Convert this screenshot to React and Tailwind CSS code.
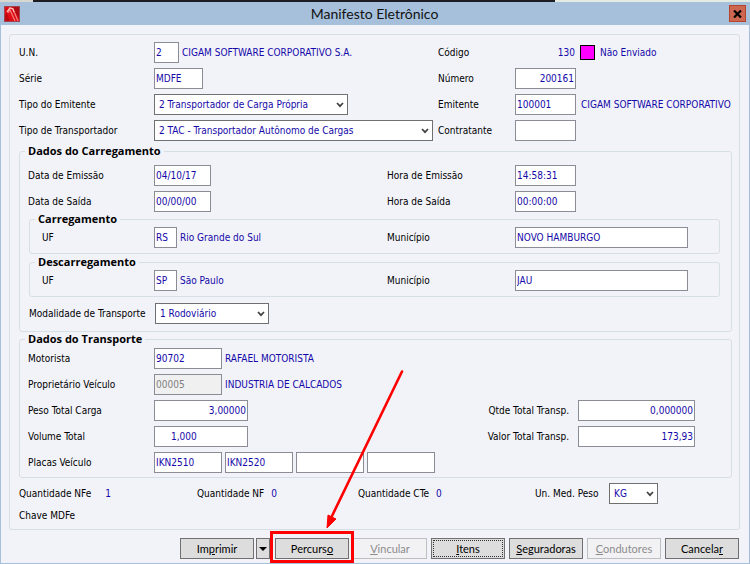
const Group = ({ title, className = '', bodyClass = '', children }) => (
    <fieldset className={`min-w-0 rounded-[3px] border border-[#d5dfe5] ${className}`}>
        <legend className="ml-[5px] h-[14px] px-[3px] font-['Open_Sans',sans-serif] text-[11px] leading-[14px] font-bold text-black">
            {title}
        </legend>
        <div className={bodyClass}>{children}</div>
    </fieldset>
);

const Label = ({ htmlFor, className = '', children }) => (
    <label htmlFor={htmlFor} className={`shrink-0 whitespace-nowrap text-black ${className}`}>
        {children}
    </label>
);

const Field = ({ className = '', ...props }) => (
    <input
        type="text"
        className={`h-[21px] shrink-0 border border-[#8c8c96] bg-white px-px text-[#1408a8] outline-none disabled:bg-[#f0f0f0] disabled:text-[#808080] ${className}`}
        {...props}
    />
);

const Select = ({ id, value, className = '' }) => (
    <div className={`relative h-[21px] shrink-0 ${className}`}>
        <select
            id={id}
            defaultValue={value}
            className="h-full w-full appearance-none border border-[#707070] bg-white pl-1 text-[#1408a8] outline-none"
        >
            <option>{value}</option>
        </select>
        <svg className="pointer-events-none absolute top-[8px] right-[4px]" width="8" height="6" viewBox="0 0 8 6">
            <path d="M1 1l3 3.2L7 1" fill="none" stroke="#404040" strokeWidth="1.7" />
        </svg>
    </div>
);

const Value = ({ className = '', children }) => (
    <span className={`whitespace-nowrap text-[#1408a8] ${className}`}>{children}</span>
);

const Button = ({ className = '', children, ...props }) => (
    <button
        type="button"
        className={`h-[21px] w-[74px] border border-[#707070] bg-[#dddddd] font-['Lato',sans-serif] text-[11px] leading-[14px] text-black disabled:border-[#bfbfbf] disabled:bg-[#f2f2f4] disabled:text-[#8c8c8c] ${className}`}
        {...props}
    >
        {children}
    </button>
);

const TitleBar = () => (
    <header className="flex h-[23px] items-center bg-[#a6c0dc] px-[3px]">
        <svg width="16" height="16" viewBox="0 0 16 16">
            <rect width="16" height="16" fill="#e00c16" />
            <path d="M10 0h6v14L9 3z" fill="#b00a12" />
            <path d="M0 10l3-3 3 9H0z" fill="#c00810" />
            <path d="M3 6l3-4 3 1 5 12M4 7l2-3 5 11" fill="none" stroke="#f4827c" strokeWidth="1.2" />
            <path d="M3 6l3-4 3 1 1 3" fill="none" stroke="#ffc4be" strokeWidth="1.2" />
            <rect x="0.5" y="0.5" width="15" height="15" fill="none" stroke="#a04452" />
        </svg>
        <h1 className="flex-1 text-center font-['Lato',sans-serif] text-[14px] leading-[20px] text-[#111]">
            Manifesto Eletrônico
        </h1>
        <button
            type="button"
            aria-label="Fechar"
            className="flex h-[17px] w-[17px] items-center justify-center border border-[#b5442c] bg-[#cc6650]"
        >
            <svg width="9" height="8" viewBox="0 0 9 8">
                <path d="M1 0.5l7 7M8 0.5l-7 7" stroke="#000" strokeWidth="2.2" />
            </svg>
        </button>
    </header>
);

const General = () => (
    <div className="grid grid-cols-[419fr_294fr]">
        <div className="space-y-[5px]">
            <div className="flex items-center">
                <Label htmlFor="un" className="w-[135px]">U.N.</Label>
                <Field id="un" defaultValue="2" className="w-[25px]" />
                <Value className="ml-[3px]">CIGAM SOFTWARE CORPORATIVO S.A.</Value>
            </div>
            <div className="flex items-center">
                <Label htmlFor="serie" className="w-[135px]">Série</Label>
                <Field id="serie" defaultValue="MDFE" className="w-[49px]" />
            </div>
            <div className="flex items-center">
                <Label htmlFor="tipoEmitente" className="w-[135px]">Tipo do Emitente</Label>
                <Select id="tipoEmitente" value="2 Transportador de Carga Própria" className="w-[194px]" />
            </div>
            <div className="flex items-center">
                <Label htmlFor="tipoTransp" className="w-[135px]">Tipo de Transportador</Label>
                <Select id="tipoTransp" value="2 TAC - Transportador Autônomo de Cargas" className="w-[279px]" />
            </div>
        </div>
        <div className="min-w-0 space-y-[5px]">
            <div className="flex h-[21px] items-center">
                <span className="w-[77px]">Código</span>
                <Value className="w-[60px] text-right">130</Value>
                <span className="mx-[5px] h-[15px] w-[15px] border border-black bg-[#ff00ff]" />
                <Value>Não Enviado</Value>
            </div>
            <div className="flex items-center">
                <Label htmlFor="numero" className="w-[77px]">Número</Label>
                <Field id="numero" defaultValue="200161" className="w-[61px] text-right" />
            </div>
            <div className="flex items-center">
                <Label htmlFor="emitente" className="w-[77px]">Emitente</Label>
                <Field id="emitente" defaultValue="100001" className="w-[61px]" />
                <Value className="ml-[5px]">CIGAM SOFTWARE CORPORATIVO</Value>
            </div>
            <div className="flex items-center">
                <Label htmlFor="contratante" className="w-[77px]">Contratante</Label>
                <Field id="contratante" className="w-[61px]" />
            </div>
        </div>
    </div>
);

const Place = ({ title, name, uf, state, city, className = '' }) => (
    <Group title={title} className={`mr-[11px] ml-[9px] ${className}`} bodyClass="pt-px pb-[5px] pl-[12px]">
        <div className="grid grid-cols-[345fr_332fr]">
            <div className="flex items-center">
                <Label htmlFor={`${name}Uf`} className="w-[112px]">UF</Label>
                <Field id={`${name}Uf`} defaultValue={uf} className="w-[23px]" />
                <Value className="ml-[3px]">{state}</Value>
            </div>
            <div className="flex items-center">
                <Label htmlFor={`${name}City`} className="w-[128px]">Município</Label>
                <Field id={`${name}City`} defaultValue={city} className="w-[173px]" />
            </div>
        </div>
    </Group>
);

const dates = [
    { id: 'Emissao', label: 'Emissão', date: '04/10/17', time: '14:58:31' },
    { id: 'Saida', label: 'Saída', date: '00/00/00', time: '00:00:00' },
];

const Loading = () => (
    <Group title="Dados do Carregamento" className="mt-[3px]" bodyClass="py-[7px]">
        <div className="space-y-[5px] pl-[8px]">
            {dates.map((d) => (
                <div key={d.id} className="grid grid-cols-[359fr_344fr]">
                    <div className="flex items-center">
                        <Label htmlFor={`data${d.id}`} className="w-[126px]">Data de {d.label}</Label>
                        <Field id={`data${d.id}`} defaultValue={d.date} className="w-[57px]" />
                    </div>
                    <div className="flex items-center">
                        <Label htmlFor={`hora${d.id}`} className="w-[128px]">Hora de {d.label}</Label>
                        <Field id={`hora${d.id}`} defaultValue={d.time} className="w-[61px]" />
                    </div>
                </div>
            ))}
        </div>
        <Place title="Carregamento" name="carga" uf="RS" state="Rio Grande do Sul" city="NOVO HAMBURGO" />
        <Place title="Descarregamento" name="descarga" uf="SP" state="São Paulo" city="JAU" className="mt-px" />
        <div className="mt-[6px] flex items-center pl-[9px]">
            <Label htmlFor="modalidade" className="w-[126px]">Modalidade de Transporte</Label>
            <Select id="modalidade" value="1 Rodoviário" className="w-[114px]" />
        </div>
    </Group>
);

const plates = ['IKN2510', 'IKN2520', '', ''];

const Transport = () => (
    <Group title="Dados do Transporte" bodyClass="space-y-[5px] pt-[2px] pr-[36px] pb-[4px] pl-[8px]">
        <div className="flex items-center">
            <Label htmlFor="motorista" className="w-[126px]">Motorista</Label>
            <Field id="motorista" defaultValue="90702" className="w-[68px]" />
            <Value className="ml-[3px]">RAFAEL MOTORISTA</Value>
        </div>
        <div className="flex items-center">
            <Label htmlFor="proprietario" className="w-[126px]">Proprietário Veículo</Label>
            <Field id="proprietario" defaultValue="00005" disabled className="w-[68px]" />
            <Value className="ml-[3px]">INDUSTRIA DE CALCADOS</Value>
        </div>
        <div className="flex items-center">
            <Label htmlFor="peso" className="w-[126px]">Peso Total Carga</Label>
            <Field id="peso" defaultValue="3,00000" className="w-[94px] text-right" />
            <Label htmlFor="qtde" className="ml-auto pr-[9px]">Qtde Total Transp.</Label>
            <Field id="qtde" defaultValue="0,000000" className="w-[117px] text-right" />
        </div>
        <div className="flex items-center">
            <Label htmlFor="volume" className="w-[126px]">Volume Total</Label>
            <Field id="volume" defaultValue="1,000" className="w-[94px] pl-[16px]" />
            <Label htmlFor="valor" className="ml-auto pr-[9px]">Valor Total Transp.</Label>
            <Field id="valor" defaultValue="173,93" className="w-[117px] text-right" />
        </div>
        <div className="flex items-center">
            <Label htmlFor="placa0" className="w-[126px]">Placas Veículo</Label>
            <div className="flex gap-[3px]">
                {plates.map((p, i) => (
                    <Field key={i} id={`placa${i}`} aria-label={`Placa ${i + 1}`} defaultValue={p} className="w-[68px]" />
                ))}
            </div>
        </div>
    </Group>
);

const Totals = () => (
    <div className="mt-[5px] grid grid-cols-[178fr_161fr_177fr_197fr] items-center">
        <div>Quantidade NFe<Value className="ml-[14px]">1</Value></div>
        <div>Quantidade NF<Value className="ml-[7px]">0</Value></div>
        <div>Quantidade CTe<Value className="ml-[7px]">0</Value></div>
        <div className="flex items-center">
            <Label htmlFor="unPeso" className="w-[74px]">Un. Med. Peso</Label>
            <Select id="unPeso" value="KG" className="w-[49px]" />
        </div>
    </div>
);

const Actions = () => (
    <footer className="mt-[8px] mb-[4px] flex justify-end gap-1 pr-[10px]">
        <div className="flex gap-[2px]">
            <Button>Im<u>p</u>rimir</Button>
            <button
                type="button"
                aria-label="Mais opções"
                className="flex h-[21px] w-[14px] items-center justify-center border border-[#707070] bg-[#dddddd]"
            >
                <svg width="8" height="4" viewBox="0 0 8 4">
                    <path d="M0 0h8L4 4z" />
                </svg>
            </button>
        </div>
        <div className="relative ml-px">
            <Button>Percurs<u>o</u></Button>
            <div className="pointer-events-none absolute -inset-x-[5px] -top-[7px] -bottom-[4px] z-10 border-[3px] border-[#ff0000]" />
            <svg
                className="pointer-events-none absolute bottom-[29px] left-[50px] z-10"
                width="80"
                height="162"
                viewBox="0 0 80 162"
            >
                <path d="M77 3.500L7 148" fill="none" stroke="#ff0000" strokeWidth="2.6" strokeLinecap="round" />
                <path d="M2 160l1-13 8 4z" fill="#ff0000" stroke="#ff0000" strokeWidth="1" />
            </svg>
        </div>
        <Button disabled><u>V</u>incular</Button>
        <Button className="border-[#3c7fb1] outline-1 -outline-offset-3 outline-dotted outline-[#333]"><u>I</u>tens</Button>
        <Button><u>S</u>eguradoras</Button>
        <Button disabled><u>C</u>ondutores</Button>
        <Button>Cancela<u>r</u></Button>
    </footer>
);

export default function App() {
    return (
        <div className="bg-[#f2f3f9] font-['DejaVu_Sans_Condensed','DejaVu_Sans',sans-serif] text-[10px] leading-[14px] text-black">
            <div className="flex h-[2px]">
                <div className="w-[33px] bg-[#d8d8d0]" />
                <div className="flex-1 bg-[#1b1d22]" />
                <div className="w-[26%] bg-[#e4ebe2]" />
            </div>
            <div className="border border-t-0 border-[#a6c0dc]">
                <TitleBar />
                <main className="mt-[9px] mr-[9px] ml-[8px] rounded-[3px] border border-[#d5dfe5] pt-[7px] pr-[7px] pb-[6px] pl-[9px]">
                    <General />
                    <Loading />
                    <Transport />
                    <Totals />
                    <p className="mt-[5px]">Chave MDFe</p>
                </main>
                <Actions />
            </div>
        </div>
    );
}
